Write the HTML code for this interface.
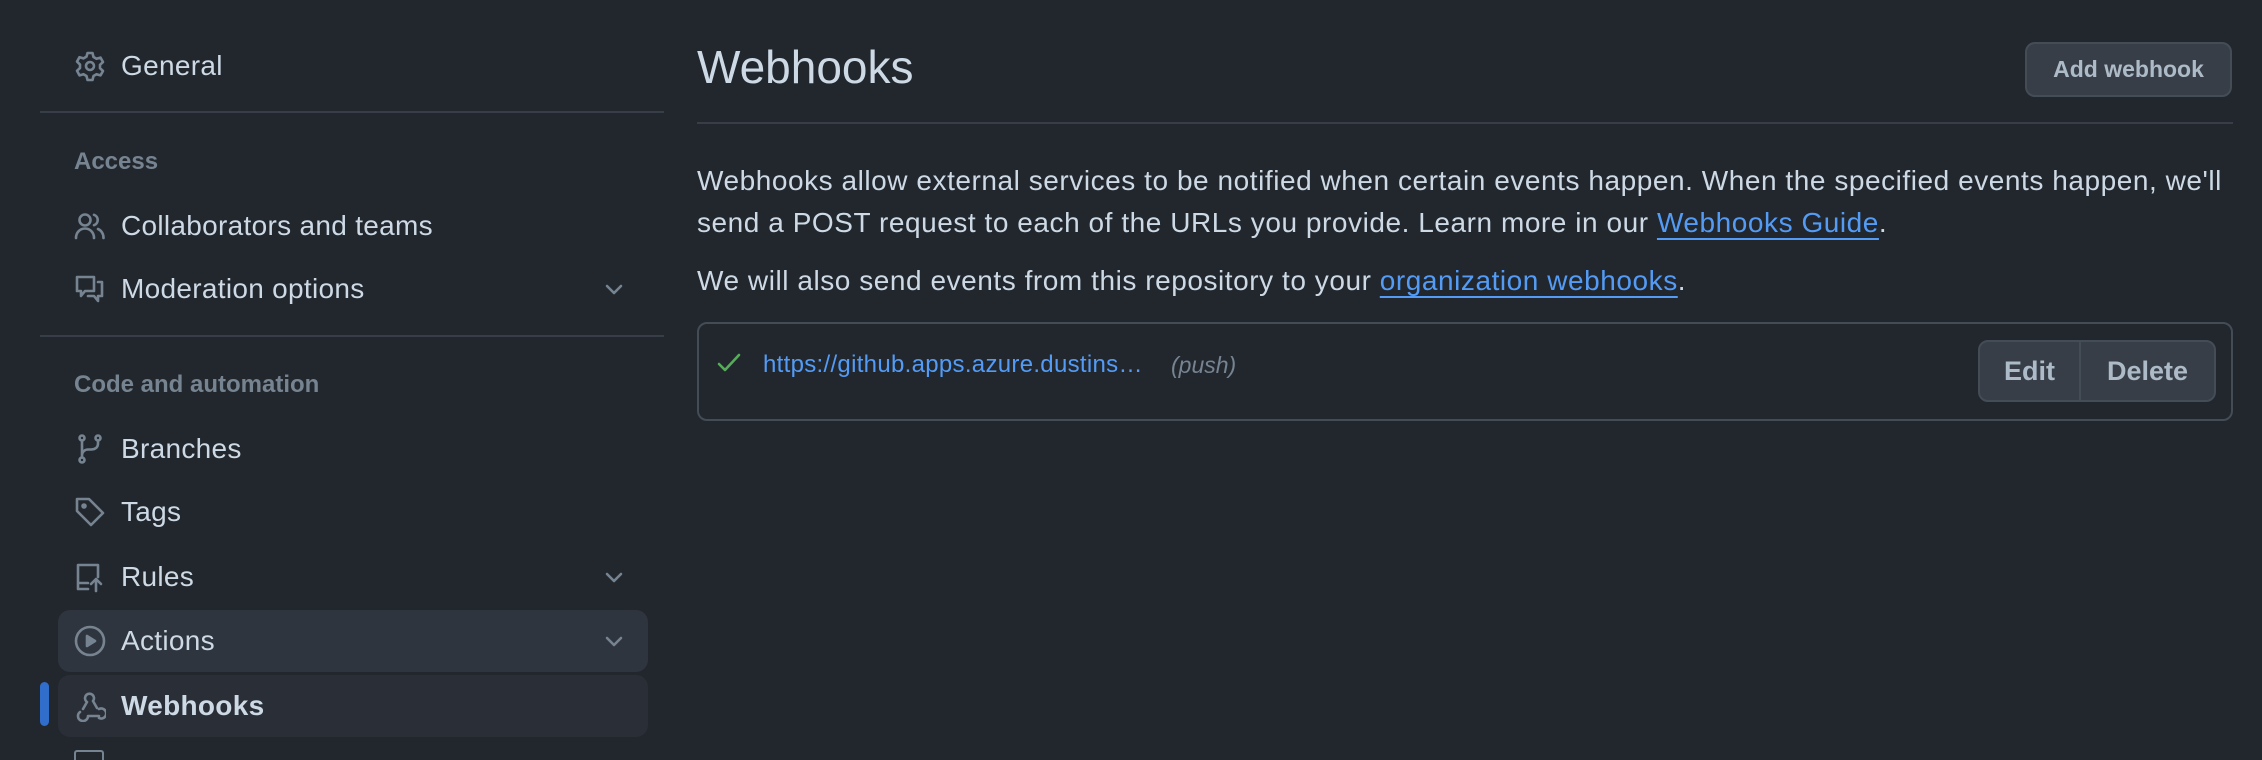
<!DOCTYPE html>
<html><head><meta charset="utf-8"><style>
*{margin:0;padding:0;box-sizing:border-box}
body{width:2262px;height:758px;background:#22272e;font-family:"Liberation Sans",sans-serif;color:#cdd9e5;position:relative;overflow:hidden}
.a{position:absolute}
.item{position:absolute;left:58px;width:590px;height:62px;border-radius:12px;display:flex;align-items:center;font-size:28px;color:#cdd9e5}
.item svg{position:absolute;left:16px;width:32px;height:32px;fill:none;stroke:#768390;stroke-width:2.6;stroke-linecap:round;stroke-linejoin:round}
.item span{position:absolute;left:63px;letter-spacing:0.3px}
.chev{position:absolute;right:22px;width:24px!important;height:24px!important;left:auto!important}
.hdr{position:absolute;left:74px;font-size:24px;font-weight:bold;color:#768390}
.div{position:absolute;left:40px;width:624px;height:2px;background:#373e47}
a{color:#539bf5;text-decoration:underline;text-underline-offset:6px;text-decoration-thickness:2px}
.p{position:absolute;left:697px;font-size:28px;line-height:42px;color:#cdd9e5;white-space:nowrap;letter-spacing:0.55px}
</style></head><body>
<div class="item" style="top:35px"><svg viewBox="0 0 32 32"><circle cx="16" cy="16" r="4"/><path d="M13.5 3h5l1 4 3 1.8 4-1.2 2.5 4.4-3 2.8v3.4l3 2.8-2.5 4.4-4-1.2-3 1.8-1 4h-5l-1-4-3-1.8-4 1.2L3 20.8l3-2.8v-3.4L3 11.6 5.5 7.2l4 1.2 3-1.8z"/></svg><span>General</span></div>
<div class="div" style="top:111px"></div>
<div class="hdr" style="top:148px">Access</div>
<div class="item" style="top:195px"><svg viewBox="0 0 32 32"><circle cx="11" cy="10" r="5.5"/><path d="M2 28c0-5.5 4-9.5 9-9.5s9 4 9 9.5M20 4.8a5.5 5.5 0 0 1 0 10.4M24 19c3.5 1.5 5.5 5 5.5 9"/></svg><span>Collaborators and teams</span></div>
<div class="item" style="top:258px"><svg viewBox="0 0 32 32"><path d="M3 4h17v14H11l-4 5v-5H3zM24 9h4v14h-4v5l-4-5h-6"/></svg><span>Moderation options</span><svg class="chev" viewBox="0 0 24 24"><path d="M5 9l7 7 7-7"/></svg></div>
<div class="div" style="top:335px"></div>
<div class="hdr" style="top:371px">Code and automation</div>
<div class="item" style="top:418px"><svg viewBox="0 0 32 32"><circle cx="8" cy="5" r="2.5"/><circle cx="8" cy="27" r="2.5"/><circle cx="24" cy="5" r="2.5"/><path d="M8 7.5v17M24 7.5v3c0 4-3 6-7 6h-3c-3 0-6 2-6 6"/></svg><span>Branches</span></div>
<div class="item" style="top:481px"><svg viewBox="0 0 32 32"><path d="M3 3h12l14 14-12 12L3 15z"/><circle cx="10" cy="10" r="1.5" fill="#768390"/></svg><span>Tags</span></div>
<div class="item" style="top:546px"><svg viewBox="0 0 32 32"><path d="M14 28H4V4h20v12M4 22h10M22 30V18M17 23l5-5 5 5"/></svg><span>Rules</span><svg class="chev" viewBox="0 0 24 24"><path d="M5 9l7 7 7-7"/></svg></div>
<div class="item" style="top:610px;background:#2f353e"><svg viewBox="0 0 32 32"><circle cx="16" cy="16" r="14"/><path d="M13 11v10l8-5z" fill="#768390"/></svg><span>Actions</span><svg class="chev" viewBox="0 0 24 24"><path d="M5 9l7 7 7-7"/></svg></div>
<div class="a" style="left:40px;top:682px;width:9px;height:44px;border-radius:5px;background:#316dca"></div>
<div class="item" style="top:675px;background:#2a2f37;font-weight:bold"><svg viewBox="0 0 32 32"><path d="M13 12l-4 7M12 11a4.5 4.5 0 1 1 7 0M19 11l4 7M6 22a5 5 0 1 0 8 4h11M25 19a5 5 0 1 1 0 9"/></svg><span>Webhooks</span></div>
<div class="a" style="left:74px;top:750px;width:30px;height:10px;border:2.6px solid #768390;border-bottom:none;border-radius:3px 3px 0 0"></div>

<div class="a" style="left:697px;top:40px;font-size:46px;color:#cdd9e5">Webhooks</div>
<div class="a" style="left:2025px;top:42px;width:207px;height:55px;background:#373e47;border:2px solid #444c56;border-radius:10px;font-size:23px;font-weight:bold;color:#adbac7;display:flex;align-items:center;justify-content:center">Add webhook</div>
<div class="a" style="left:697px;top:122px;width:1536px;height:2px;background:#373e47"></div>
<div class="p" style="top:160px">Webhooks allow external services to be notified when certain events happen. When the specified events happen, we'll<br>send a POST request to each of the URLs you provide. Learn more in our <a>Webhooks Guide</a>.</div>
<div class="p" style="top:260px">We will also send events from this repository to your <a>organization webhooks</a>.</div>
<div class="a" style="left:697px;top:322px;width:1536px;height:99px;border:2px solid #444c56;border-radius:10px"></div>
<svg class="a" style="left:716px;top:350px" width="26" height="26" viewBox="0 0 26 26"><path d="M3 14l6 6L23 5" fill="none" stroke="#57ab5a" stroke-width="2.6" stroke-linecap="round" stroke-linejoin="round"/></svg>
<div class="a" style="left:763px;top:351px;font-size:24px;color:#539bf5;letter-spacing:0.3px">https://github.apps.azure.dustins…</div>
<div class="a" style="left:1171px;top:352px;font-size:23px;color:#768390;font-style:italic">(push)</div>
<div class="a" style="left:1978px;top:340px;width:238px;height:62px;background:#373e47;border:2px solid #444c56;border-radius:10px;display:flex;font-size:27px;font-weight:bold;color:#adbac7">
<div style="width:101px;display:flex;align-items:center;justify-content:center;border-right:2px solid #444c56">Edit</div>
<div style="flex:1;display:flex;align-items:center;justify-content:center">Delete</div></div>
</body></html>
